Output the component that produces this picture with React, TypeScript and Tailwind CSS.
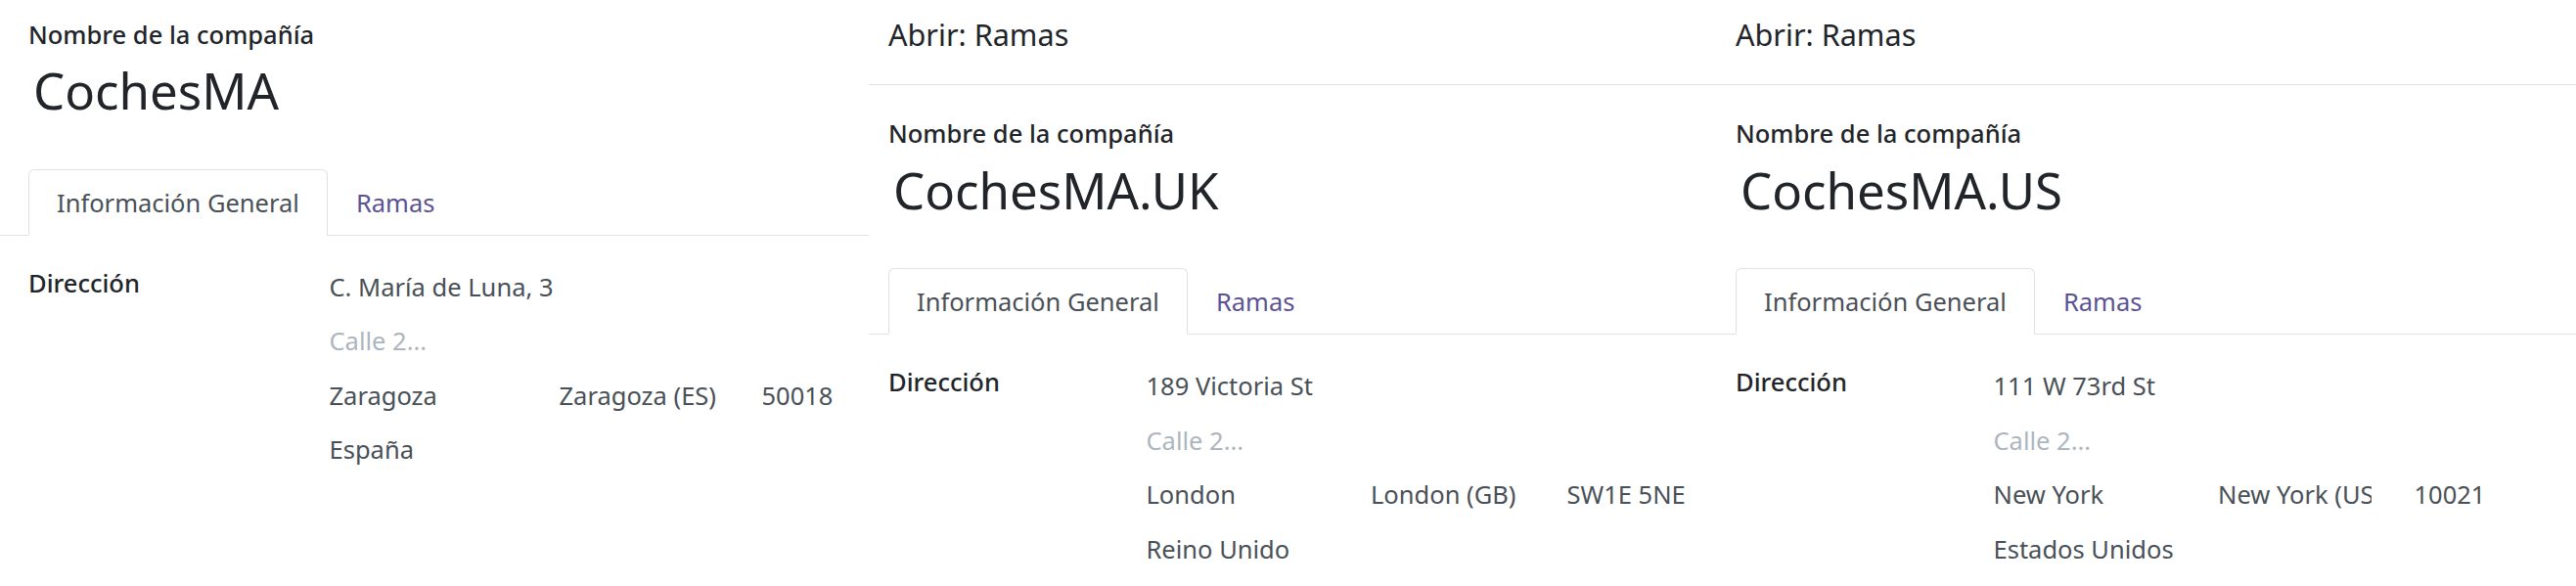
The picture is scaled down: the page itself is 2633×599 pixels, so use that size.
import React from "react";

type PanelProps = {
  width: string;
  header?: boolean;
  pad: string;
  labelCol: string;
  cityCol: string;
  stateCol: string;
  stateClip: string;
  name: string;
  street: string;
  city: string;
  state: string;
  zip: string;
  country: string;
  topPad: string;
};

function Panel(p: PanelProps) {
  return (
    <div className={`${p.width} flex flex-col`}>
      {p.header && (
        <div className="border-b border-[#dee2e6] pt-[13px] pb-[29px] pl-[20px] text-[30.6px] leading-[44px] text-[#212529]">
          Abrir: Ramas
        </div>
      )}
      <div className={`${p.pad} ${p.topPad}`}>
        <div className="text-[25.5px] leading-[38px] font-medium text-[#212529]">
          Nombre de la compañía
        </div>
        <div className="mt-[6.5px] pl-[5px] text-[51px] leading-[64px] text-[#212529]">
          {p.name}
        </div>
      </div>
      <div className={`mt-[48.5px] flex border-b border-[#dee2e6] ${p.pad}`}>
        <div className="-mb-px rounded-t-[6px] border border-[#dee2e6] border-b-white bg-white px-[28px] py-[14px] text-[25.5px] leading-[38px] text-[#495057]">
          Información General
        </div>
        <div className="-mb-px border border-transparent px-[28px] py-[14px] text-[25.5px] leading-[38px] text-[#5c5393]">
          Ramas
        </div>
      </div>
      <div className={`flex pt-[25px] ${p.pad}`}>
        <div className={`${p.labelCol} shrink-0 text-[25.5px] leading-[47.5px] font-medium text-[#212529]`}>
          Dirección
        </div>
        <div className="flex flex-col text-[25.5px] leading-[55.5px] text-[#495057]">
          <div>{p.street}</div>
          <div className="text-[#adb5bd]">Calle 2...</div>
          <div className="flex whitespace-nowrap">
            <div className={`${p.cityCol} shrink-0`}>{p.city}</div>
            <div className={`${p.stateCol} shrink-0`}>
              <div className={`${p.stateClip} overflow-hidden`}>{p.state}</div>
            </div>
            <div>{p.zip}</div>
          </div>
          <div>{p.country}</div>
        </div>
      </div>
    </div>
  );
}

export default function App() {
  return (
    <div className="flex h-[599px] w-[2633px] overflow-hidden bg-white font-['Noto_Sans',sans-serif]">
      <Panel
        width="w-[888px] shrink-0"
        pad="pl-[29px]"
        topPad="pt-[15.6px]"
        labelCol="w-[307.5px]"
        cityCol="w-[235px]"
        stateCol="w-[207px]"
        stateClip="w-[162px]"
        name="CochesMA"
        street="C. María de Luna, 3"
        city="Zaragoza"
        state="Zaragoza (ES)"
        zip="50018"
        country="España"
      />
      <Panel
        width="w-[866px] shrink-0"
        header
        pad="pl-[20px]"
        topPad="pt-[30px]"
        labelCol="w-[263.5px]"
        cityCol="w-[229.5px]"
        stateCol="w-[200.5px]"
        stateClip="w-[157px]"
        name="CochesMA.UK"
        street="189 Victoria St"
        city="London"
        state="London (GB)"
        zip="SW1E 5NE"
        country="Reino Unido"
      />
      <Panel
        width="flex-1 min-w-0"
        header
        pad="pl-[20px]"
        topPad="pt-[30px]"
        labelCol="w-[263.5px]"
        cityCol="w-[229.5px]"
        stateCol="w-[200.5px]"
        stateClip="w-[157px]"
        name="CochesMA.US"
        street="111 W 73rd St"
        city="New York"
        state="New York (US)"
        zip="10021"
        country="Estados Unidos"
      />
    </div>
  );
}
